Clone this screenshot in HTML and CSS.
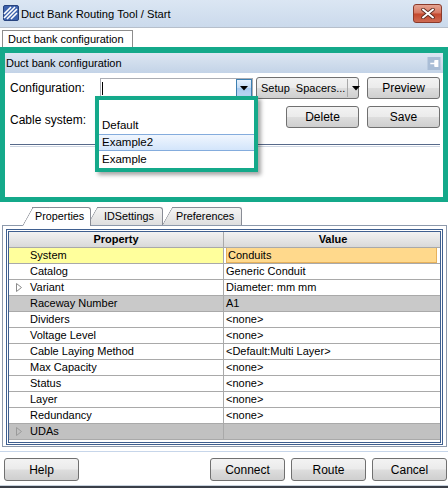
FILE: index.html
```html
<!DOCTYPE html>
<html>
<head>
<meta charset="utf-8">
<link rel="stylesheet" href="styles.css">
</head>
<body>
<div class="win">
  <div class="titlebar">
    <svg class="appicon" viewBox="0 0 16 16">
      <rect x="0.5" y="0.5" width="15" height="15" rx="1.5" fill="#3d62ad" stroke="#27437f"/>
      <path d="M1 9 L8 2 M1 13 L12 2 M4 14 L14 4 M8 14 L14 8" stroke="#fff" stroke-width="1.6"/>
    </svg>
    <span class="title">Duct Bank Routing Tool / Start</span>
    <div class="close">
      <svg viewBox="0 0 14 11" width="14" height="11">
        <path d="M2 1.5 L12 9.5 M12 1.5 L2 9.5" stroke="#5a2a20" stroke-width="3.6" stroke-linecap="round"/>
        <path d="M2 1.5 L12 9.5 M12 1.5 L2 9.5" stroke="#fff" stroke-width="2" stroke-linecap="round"/>
      </svg>
    </div>
  </div>

  <div class="tabstrip">
    <div class="doctab">Duct bank configuration</div>
  </div>

  <div class="cfg">
    <div class="cfghead">
      <span>Duct bank configuration</span>
      <svg class="pin" viewBox="0 0 14 14">
        <rect x="0" y="0" width="14" height="14" fill="#a9bdd6"/>
        <path d="M3 7 H8 M8 3.5 V10.5 M8 4 H11 V10 H8" stroke="#fff" stroke-width="1.4" fill="#fff"/>
      </svg>
    </div>
    <div class="cfgbody">
      <div class="frow r1">
        <span class="lbl">Configuration:</span>
        <div class="combo">
          <span class="caret"></span>
          <span class="ddbtn"><svg viewBox="0 0 8 5" width="8" height="5"><path d="M0 0 H8 L4 4.5 Z" fill="#000"/></svg></span>
        </div>
        <div class="btn split">
          <span class="splittext">Setup&nbsp; Spacers...</span>
          <span class="splitsep"></span>
          <svg class="splitarrow" viewBox="0 0 8 5" width="8" height="5"><path d="M0 0 H8 L4 4.5 Z" fill="#000"/></svg>
        </div>
        <div class="btn b73 gap8">Preview</div>
      </div>
      <div class="frow r2">
        <span class="lbl lbl2">Cable system:</span>
        <div class="btn b73 push">Delete</div>
        <div class="btn b73 gap8">Save</div>
      </div>
      <div class="hsep"></div>
    </div>
  </div>

  <div class="popup">
    <div class="item"></div>
    <div class="item">Default</div>
    <div class="item sel">Example2</div>
    <div class="item">Example</div>
  </div>

  <div class="lowtabs">
    <div class="ltab active t1">Properties</div>
    <div class="ltab t2">IDSettings</div>
    <div class="ltab t3">Preferences</div>
  </div>

  <div class="panel">
    <div class="grid">
      <div class="prow head"><div class="pc">Property</div><div class="vc">Value</div></div>
      <div class="prow sys"><div class="pc">System</div><div class="vc"><span class="selval">Conduits</span></div></div>
      <div class="prow"><div class="pc">Catalog</div><div class="vc">Generic Conduit</div></div>
      <div class="prow"><div class="pc"><svg class="tri" viewBox="0 0 6 9" width="6" height="9"><path d="M0.5 0.5 L5.5 4.5 L0.5 8.5 Z" fill="none" stroke="#8a8a8a"/></svg>Variant</div><div class="vc">Diameter: mm mm</div></div>
      <div class="prow gray"><div class="pc">Raceway Number</div><div class="vc">A1</div></div>
      <div class="prow"><div class="pc">Dividers</div><div class="vc">&lt;none&gt;</div></div>
      <div class="prow"><div class="pc">Voltage Level</div><div class="vc">&lt;none&gt;</div></div>
      <div class="prow"><div class="pc">Cable Laying Method</div><div class="vc">&lt;Default:Multi Layer&gt;</div></div>
      <div class="prow"><div class="pc">Max Capacity</div><div class="vc">&lt;none&gt;</div></div>
      <div class="prow"><div class="pc">Status</div><div class="vc">&lt;none&gt;</div></div>
      <div class="prow"><div class="pc">Layer</div><div class="vc">&lt;none&gt;</div></div>
      <div class="prow"><div class="pc">Redundancy</div><div class="vc">&lt;none&gt;</div></div>
      <div class="prow gray2"><div class="pc"><svg class="tri" viewBox="0 0 6 9" width="6" height="9"><path d="M0.5 0.5 L5.5 4.5 L0.5 8.5 Z" fill="none" stroke="#9a9a9a"/></svg>UDAs</div><div class="vc"></div></div>
    </div>
  </div>

  <div class="footline"></div>
  <div class="footer">
    <div class="btn b75 help">Help</div>
    <div class="btn b75 connect">Connect</div>
    <div class="btn b75 gap6">Route</div>
    <div class="btn b75 gap6">Cancel</div>
  </div>
  <div class="bottomedge"></div>
</div>
</body>
</html>
```

FILE: styles.css
```css
* { box-sizing: border-box; }

body {
  margin: 0;
  width: 448px;
  height: 488px;
  overflow: hidden;
  background: #fff;
  color: #000;
  font-family: "Liberation Sans", Arial, sans-serif;
  font-size: 12px;
}

.win {
  position: relative;
  height: 488px;
  display: flex;
  flex-direction: column;
}

/* title bar */
.titlebar {
  height: 27px;
  flex: none;
  display: flex;
  align-items: center;
  padding: 0 6px 0 3px;
  background: linear-gradient(#dbe6f3, #cbdaec);
}
.appicon { width: 16px; height: 16px; margin-right: 2px; margin-top: -1px; }
.title { flex: 1; font-size: 11.2px; }
.close {
  width: 29px;
  height: 19px;
  border: 1px solid #8a3a2b;
  border-radius: 3px;
  background: linear-gradient(#e5a593 0%, #d77862 48%, #c4472c 52%, #cf6b53 100%);
  display: flex;
  align-items: center;
  justify-content: center;
}

/* document tab strip */
.tabstrip {
  height: 20px;
  flex: none;
  border-top: 1px solid #b6bfcb;
  background: #fff;
  padding: 2px 0 0 2px;
  display: flex;
}
.doctab {
  width: 131px;
  height: 17px;
  border: 1px solid #8d8d8d;
  border-bottom: none;
  padding-left: 5px;
  font-size: 11px;
  line-height: 16px;
  background: #fff;
}

/* configuration frame */
.cfg {
  height: 155px;
  flex: none;
  border: 5px solid #14a98a;
  border-top-width: 6px;
  display: flex;
  flex-direction: column;
  background: #fff;
}
.cfghead {
  height: 20px;
  flex: none;
  display: flex;
  align-items: center;
  justify-content: space-between;
  padding: 0 2px 0 1px;
  font-size: 11px;
  background: linear-gradient(#dce6f2, #c3d3e7);
}
.pin { width: 14px; height: 13px; }

.cfgbody {
  flex: 1;
  display: flex;
  flex-direction: column;
  padding: 4px 3px 0 5px;
}
.frow {
  display: flex;
  align-items: flex-start;
  height: 22px;
}
.r2 { margin-top: 7px; }
.lbl {
  width: 90px;
  flex: none;
  line-height: 22px;
  white-space: nowrap;
}
.lbl2 { padding-top: 3px; }

.combo {
  position: relative;
  width: 153px;
  height: 20px;
  margin-top: 1px;
  border: 1px solid #abadb3;
  background: #fff;
}
.caret {
  position: absolute;
  left: 1px;
  top: 3px;
  width: 1px;
  height: 13px;
  background: #000;
}
.ddbtn {
  position: absolute;
  right: 0;
  top: 0;
  width: 16px;
  height: 18px;
  border: 1px solid #3c7fb1;
  background: linear-gradient(#e6f1fc, #c4dcf5 50%, #a9cbef 51%, #b9d6f3);
  display: flex;
  align-items: center;
  justify-content: center;
}

.btn {
  height: 22px;
  border: 1px solid #707070;
  border-radius: 3px;
  background: linear-gradient(#f3f3f3 0%, #ebebeb 48%, #dddddd 52%, #cfcfcf 100%);
  display: flex;
  align-items: center;
  justify-content: center;
  flex: none;
  white-space: nowrap;
}
.b73 { width: 73px; }
.b75 { width: 75px; height: 23px; }
.gap8 { margin-left: 8px; }
.gap6 { margin-left: 6px; }
.push { margin-left: auto; }

.split {
  width: 103px;
  margin-left: 3px;
  justify-content: flex-start;
  padding-left: 4px;
}
.splittext {
  font-size: 11px;
  width: 86px;
  flex: none;
  white-space: nowrap;
  overflow: hidden;
}
.splitsep { width: 1px; height: 18px; background: #a8a8a8; flex: none; }
.splitarrow { margin-left: 4px; flex: none; }

.hsep {
  margin-top: 16px;
  height: 3px;
  border-top: 1px solid #56698a;
  border-bottom: 1px solid #cdd5e1;
}

/* dropdown popup */
.popup {
  position: absolute;
  left: 95px;
  top: 96px;
  width: 163px;
  height: 76px;
  border: 4px solid #14a98a;
  background: #fff;
  box-shadow: 3px 3px 4px rgba(0, 0, 0, 0.35);
  z-index: 5;
}
.item {
  height: 17px;
  line-height: 17px;
  padding-left: 3px;
  font-size: 11.5px;
}
.item.sel {
  border-top: 1px solid #84acdd;
  border-bottom: 1px solid #84acdd;
  line-height: 15px;
  background: linear-gradient(#f0f6fe, #d3e5fb);
}

/* lower tabs */
.lowtabs {
  position: relative;
  z-index: 2;
  flex: none;
  height: 18px;
  margin-top: 5px;
  padding-left: 32px;
  display: flex;
  align-items: flex-start;
}
.ltab {
  position: relative;
  height: 18px;
  border-top: 1px solid #898c95;
  border-right: 1px solid #898c95;
  border-radius: 0 3px 0 0;
  background: linear-gradient(#f4f4f4, #dedede);
  font-size: 10.8px;
  line-height: 17px;
  white-space: nowrap;
}
.ltab::before {
  content: "";
  position: absolute;
  top: -1px;
  bottom: 0;
  left: -10px;
  width: 16px;
  background: inherit;
  border-left: 1px solid #898c95;
  border-top: 1px solid #898c95;
  border-top-left-radius: 2px;
  transform: skewX(-29deg);
  transform-origin: bottom left;
  z-index: -1;
}
.ltab.active {
  height: 19px;
  background: #fff;
}
.t1 { width: 59px; padding-left: 3px; z-index: 3; }
.t2 { width: 66px; margin-left: 6px; padding-left: 7px; z-index: 2; }
.t3 { width: 70px; margin-left: 9px; padding-left: 4px; z-index: 1; }

/* property panel */
.panel {
  position: relative;
  z-index: 1;
  flex: none;
  height: 222px;
  margin: 0 1px 0 2px;
  border: 1px solid #8d99ab;
  padding: 3px 3px 1px 3px;
  background: #fff;
}
.grid {
  height: 100%;
  border: 3px double #3f5f8f;
  background: #fff;
  font-size: 11px;
}
.prow {
  display: grid;
  grid-template-columns: 215px 1fr;
  height: 16px;
  border-bottom: 1px solid #a9a9a9;
  line-height: 15px;
}
.pc {
  position: relative;
  padding-left: 21px;
  border-right: 1px solid #a9a9a9;
  white-space: nowrap;
}
.vc {
  padding-left: 2px;
  white-space: nowrap;
}
.head {
  background: linear-gradient(#f2f2f2, #d9d9d9);
  font-weight: bold;
  text-align: center;
}
.head .pc { padding-left: 0; }
.sys .pc { background: #ffff9c; }
.selval {
  display: block;
  height: 15px;
  margin-right: 3px;
  padding-left: 1px;
  background: #ffd98c;
  border: 1px solid #e7b25c;
  border-top: none;
  line-height: 14px;
}
.gray { background: #c9c9c9; }
.gray2 { background: #c1c1c1; }
.tri {
  position: absolute;
  left: 7px;
  top: 3px;
}

/* footer */
.footline {
  flex: none;
  height: 1px;
  margin-top: 4px;
  background: #c7d6ea;
}
.footer {
  flex: none;
  display: flex;
  margin-top: 6px;
  padding-left: 4px;
}
.connect { margin-left: 131px; }
.bottomedge {
  flex: none;
  margin-top: auto;
  height: 3px;
  border-top: 1px solid #c9d3de;
  background: #3a3f48;
}
```
